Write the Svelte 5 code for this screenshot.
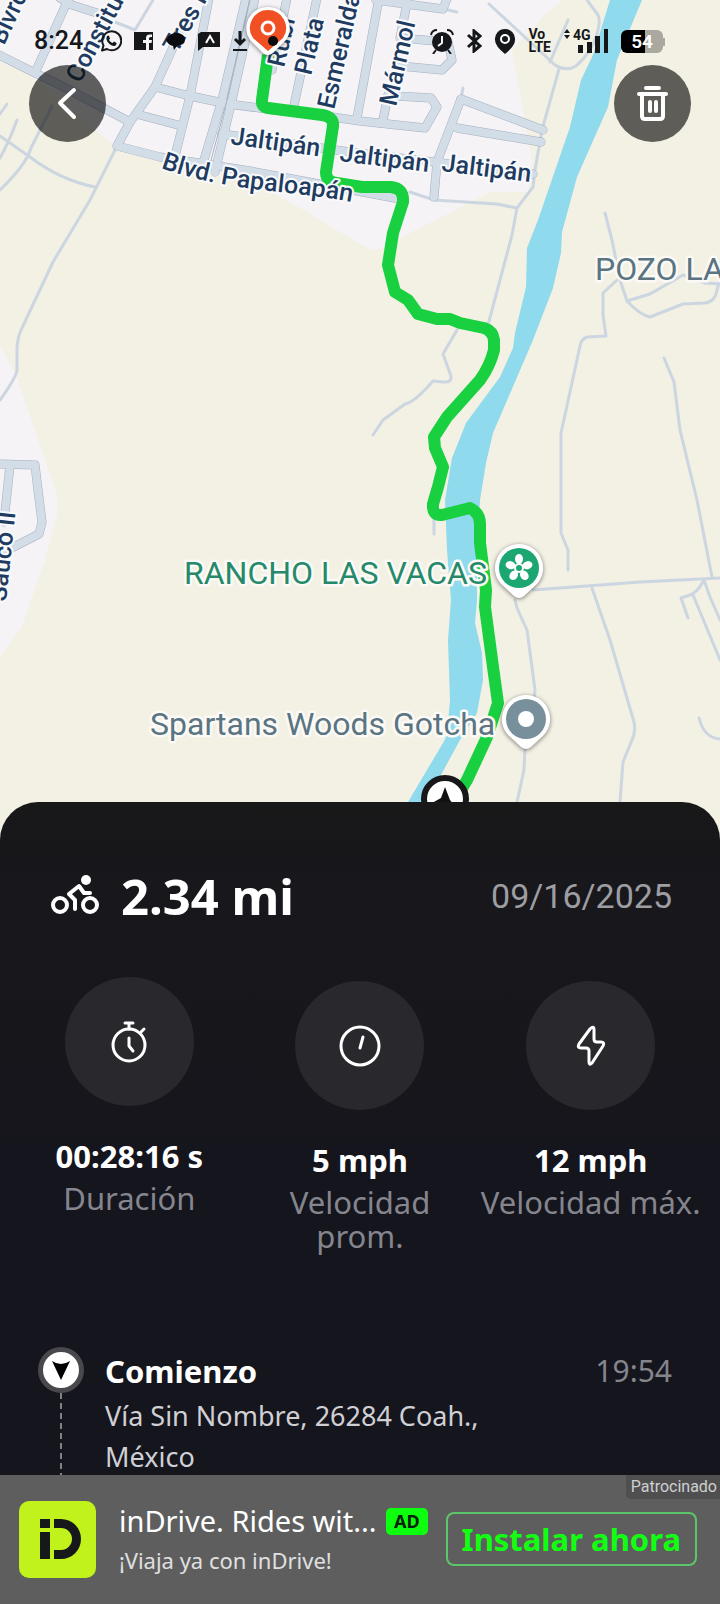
<script>
  const streets = [
    'M-5 53 L35 73 L60 85 L130 122 L117 146 L160 157 L250 171 L400 199',
    'M68 0 L35 73',
    'M60 -2 L72 5 L100 14',
    'M180 32 L155 87 L130 122',
    'M155 87 L190 96 L228 104 L267 109 L325 116 L360 121 L425 128 L437 107 L431 98 L396 96',
    'M140 115 L178 125',
    'M209 -2 L190 96 L175 156',
    'M246 -2 L222 100 L203 163',
    'M255 -2 L232 100 L215 172',
    'M287 -2 L272 70',
    'M317 -2 L293 110',
    'M222 134 L350 152 L434 162 L533 174',
    'M379 -2 L357 118',
    'M376 0 L443 9 L448 -4',
    'M407 3 L400 38 L448 42 L452 60 L442 70 L400 66',
    'M383 120 L388 95',
    'M461 99 L543 130',
    'M457 128 L541 142',
    'M461 99 L437 162 L434 197'
  ];
  const westStreets = [
    'M-4 464 L35 465 L38 490 L42 522 L39 534 L0 554',
    'M10 465 L4 522'
  ];
  const tracks = [
    'M115 150 L90 200 L53 262 L22 328 Q17 338 17 350 L17 370 Q16 378 0 400',
    'M0 136 L30 157 Q60 180 95 187',
    'M17 120 Q10 140 0 158',
    'M7 104 L0 114',
    'M52 106 L31 148 Q26 165 0 190',
    'M115 22 L135 30 L153 0',
    'M448 10 L457 12',
    'M489 4 L555 65 Q566 72 576 66 Q592 52 597 34 Q601 20 598 15 L587 0',
    'M568 20 L550 62',
    'M463 88 L461 98',
    'M559 69 L542 130 L535 170 L533 187 L517 208 L512 235 L488 325',
    'M410 192 L434 200 L497 204 L517 208',
    'M605 213 L612 240 L620 280 L627 301 Q640 315 650 317 L683 304 L705 303 Q715 302 717 290 L720 280',
    'M627 301 L650 294 L683 275 L705 283 L720 284',
    'M617 280 L603 293 L603 315 L606 336 L587 337 Q581 339 580 346 L561 433 L561 533 L568 550 L568 570',
    'M664 358 L674 382 L680 430 L697 500 L712 577',
    'M457 330 L443 354 L451 376 Q452 383 443 382 L433 381 Q415 402 405 404 L383 420 L373 435',
    'M434 518 L434 534',
    'M533 590 L640 582 L720 578',
    'M592 588 L610 640 L634 722 Q636 732 632 740 L623 762 L619 815',
    'M515 600 L517 608 L527 630 L531 660 L535 690 L534 700',
    'M525 748 L524 770 L517 802 L514 820',
    'M704 580 Q698 592 690 595 L681 598 L688 618',
    'M693 595 L720 660',
    'M704 580 L710 597 L720 620',
    'M699 718 Q704 738 720 739'
  ];
  const route =
    'M268 55 L262 100 Q261 107 268 108 L322 115 Q334 117 333 126 L326 172 Q326 182 337 183 L362 187 L391 187 Q404 188 403 202 L393 233 L388 265 L395 292 L408 300 L418 314 L437 319 L450 319 L460 323 L484 328 Q493 331 494 340 L494 350 Q490 366 480 380 L447 417 L434 437 L435 448 L443 467 L438 487 L433 504 Q432 516 442 515 L470 508 Q480 513 480 524 L480 543 L486 590 L485 607 L493 667 L498 703 L487 737 L467 780 L455 800';

  const streetLabels = [
    { text: 'Blvrd', x: 4, y: 46, turn: -65 },
    { text: 'Constitución', x: 80, y: 84, turn: -62 },
    { text: 'Tres Pinos', x: 177, y: 54, turn: -61 },
    { text: 'Rubí', x: 284, y: 68, turn: -77 },
    { text: 'Plata', x: 311, y: 76, turn: -77 },
    { text: 'Esmeralda', x: 334, y: 110, turn: -77 },
    { text: 'Mármol', x: 396, y: 107, turn: -77 },
    { text: 'Jaltipán', x: 230, y: 144, turn: 8 },
    { text: 'Jaltipán', x: 339, y: 161, turn: 7 },
    { text: 'Jaltipán', x: 441, y: 171, turn: 7 },
    { text: 'Sauco II', x: 6, y: 602, turn: -84 }
  ];

  const stats = [
    { icon: 'timer', value: '00:28:16 s', label: 'Duración' },
    { icon: 'speed', value: '5 mph', label: 'Velocidad prom.' },
    { icon: 'bolt', value: '12 mph', label: 'Velocidad máx.' }
  ];
</script>

<div class="screen">
  <main class="scroll">
    <section class="map">
      <svg class="canvas" viewBox="0 0 720 842" role="img" aria-label="Mapa del recorrido">
        <rect width="720" height="842" fill="#f3f0e4" />
        <path fill="#f5f3f6" d="M0 0 H562 L545 15 L512 50 L523 110 L532 160 L528 192 L490 192 L467 204 L410 233 L385 248 L372 250 L345 235 L300 208 L250 180 L117 148 L105 138 L30 75 L0 62Z" />
        <path fill="#f5f3f6" d="M0 345 L17 378 L40 445 L57 495 V515 L45 560 L22 627 L0 657Z" />
        <path fill="#8fdaec" d="M610 0 L593 55 L581 80 L570 127 L538 220 L527 248 L526 287 L515 333 L513 348 L500 377 L466 423 L452 458 L445 500 L447 550 L451 600 L448 640 L450 700 L447 735 L443 743 L408 802 L396 822 H421 L442 773 L460 740 L477 713 L483 680 L482 653 L475 623 L477 600 L477 550 L480 500 L486 463 L493 433 L533 340 L553 288 L561 253 L562 232 L577 177 L608 107 L617 60 L642 0Z" />
        <g fill="none" stroke="#ccd6e1" stroke-width="3" stroke-linejoin="round" stroke-linecap="round">
          {#each tracks as d}<path {d} />{/each}
        </g>
        <g fill="none" stroke-linejoin="round" stroke-linecap="round">
          {#each [...streets, ...westStreets] as d}<path {d} stroke="#a3afbf" stroke-width="9" />{/each}
          {#each [...streets, ...westStreets] as d}<path {d} stroke="#d3dde8" stroke-width="8" />{/each}
          <path d="M250 -2 L227 100 L209 168" stroke="#a3afbf" stroke-width="1" />
        </g>
        <path d={route} fill="none" stroke="#19d040" stroke-width="12" stroke-linejoin="round" />

        <g class="street">
          {#each streetLabels as s}
            <text transform="translate({s.x} {s.y}) rotate({s.turn})">{s.text}</text>
          {/each}
          <path id="boulevard" d="M161 168 Q205 184 270 191 T356 203" fill="none" stroke="none" />
          <text><textPath href="#boulevard">Blvd. Papaloapán</textPath></text>
        </g>
        <g class="place">
          <text x="184" y="584" fill="#25896a">RANCHO LAS VACAS</text>
          <text x="150" y="735" fill="#5a7482">Spartans Woods Gotcha</text>
          <text x="595" y="280" fill="#5a7482">POZO LA PALMA</text>
        </g>

        <g class="pin" transform="translate(519 568)">
          <path fill="#fff" d="M0 -24 A24 24 0 0 1 18 16 L5 28 Q0 32 -5 28 L-18 16 A24 24 0 0 1 0 -24Z" />
          <circle r="20" fill="#1ba672" />
          {#each [0, 72, 144, 216, 288] as a}
            <ellipse cx="0" cy="-9" rx="4" ry="5" fill="#fff" transform="rotate({a})" />
          {/each}
          <circle r="5" fill="#fff" /><circle r="3" fill="#1ba672" />
        </g>
        <g class="pin" transform="translate(526 719)">
          <path fill="#fff" d="M0 -24 A24 24 0 0 1 18 16 L5 28 Q0 32 -5 28 L-18 16 A24 24 0 0 1 0 -24Z" />
          <circle r="20" fill="#78909c" /><circle r="8" fill="#fff" />
        </g>
        <g class="pin" transform="translate(268 28)">
          <path fill="#fff" d="M0 -21 A21 21 0 0 1 18 12 L5 25 Q0 29 -5 25 L-18 12 A21 21 0 0 1 0 -21Z" />
          <path fill="#f15024" d="M0 -18 A18 18 0 0 1 15 10 L0 23 L-15 10 A18 18 0 0 1 0 -18Z" />
          <circle r="6" fill="none" stroke="#fff" stroke-width="3" />
        </g>
        <g transform="translate(445 799)">
          <circle r="21" fill="#fff" stroke="#18181a" stroke-width="6" />
          <path d="M0 -12 L5 1 L13 11 L0 6 L-13 4 L-4 -1Z" fill="#111" />
        </g>
      </svg>

      <div class="overlay">
        <div class="status">
          <div class="group">
            <span class="clock">8:24</span>
            <svg width="22" height="22" viewBox="0 0 22 22"><path d="M2 20.5 L3.500 15.500 A9.500 9.500 0 1 1 7 19Z" fill="none" stroke="#15171a" stroke-width="2" stroke-linejoin="round" /><path d="M7 6 Q8 5 9 6 L10 8.500 L9 10 Q10 12 12.500 13 L14 11.500 L16.500 13 Q17 14 15.500 15.500 Q13 17 9.500 14 Q5 10 7 6Z" fill="#15171a" /></svg>
            <svg width="20" height="20" viewBox="0 0 20 20"><path fill="#15171a" fill-rule="evenodd" d="M0 1 H19 V19 H15 V12 H17.500 L18 9 H15 V7.500 Q15 6 16.500 6 H18 V3.500 H15.500 Q12 3.500 12 7 V9 H9 V12 H12 V19 H0Z" /></svg>
            <svg width="20" height="20" viewBox="0 0 20 20"><path fill="#0b0c0d" d="M10 2 C16 2 19 5 19 9 C19 13 15 14 11 15 L8 19 L7 15 Q2 14 0 9 Q3 2 10 2Z" /></svg>
            <svg width="22" height="20" viewBox="0 0 22 20"><path fill="#15171a" d="M3 1 H22 V16 H5 L0 20 V3Z" /><path d="M8 12 L12 5 L16 12" fill="none" stroke="#fff" stroke-width="2" /></svg>
            <svg width="16" height="22" viewBox="0 0 16 22"><path d="M8 1 V14 M3 9 L8 14 L13 9" fill="none" stroke="#15171a" stroke-width="3" /><path d="M1 20 H15" stroke="#15171a" stroke-width="2" /></svg>
            <span class="dot"></span>
          </div>
          <div class="group">
            <svg width="24" height="25" viewBox="0 0 24 25"><circle cx="12" cy="13" r="10" fill="#15171a" /><path d="M1 6 Q2 1 7 1 M17 1 Q22 1 23 6 M6 21 L3 25 M18 21 L21 25" fill="none" stroke="#15171a" stroke-width="2" /><path d="M12 7 V14 L8 17" fill="none" stroke="#f5f3f6" stroke-width="2" /></svg>
            <svg width="16" height="24" viewBox="0 0 16 24"><path d="M2 6 L14 17 L8 22 V2 L14 7 L2 18" fill="none" stroke="#15171a" stroke-width="3" /></svg>
            <svg width="22" height="25" viewBox="0 0 22 25"><path fill="#15171a" d="M11 0 A10 10 0 0 1 21 11 Q21 17 11 25 Q1 17 1 11 A10 10 0 0 1 11 0Z" /><circle cx="11" cy="10" r="4" fill="none" stroke="#fff" stroke-width="2" /></svg>
            <span class="volte">Vo<br />LTE</span>
            <svg width="46" height="26" viewBox="0 0 46 26"><path fill="#15171a" d="M1 5 L4 1 L7 5Z M1 7 L4 11 L7 7Z M15 17 h5 v8 h-5z M24 14 h5 v11 h-5z M32 8 h5 v17 h-5z M41 1 h4 v24 h-4z" /><text x="10" y="12" class="net">4G</text></svg>
            <span class="battery">54</span>
          </div>
        </div>
        <div class="actions">
          <button class="round" aria-label="Volver">
            <svg width="77" height="77" viewBox="0 0 77 77"><path d="M45 25 L31 38 L45 52" fill="none" stroke="#fff" stroke-width="4" stroke-linecap="round" stroke-linejoin="round" /></svg>
          </button>
          <button class="round" aria-label="Eliminar">
            <svg width="77" height="77" viewBox="0 0 77 77"><g fill="none" stroke="#fff" stroke-width="4" stroke-linecap="round" stroke-linejoin="round"><path d="M32 23 H45" /><path d="M25 29 H52" /><path d="M28 30 V51 Q28 54 31 54 H46 Q49 54 49 51 V30" /><path d="M36 37 V46 M42 37 V46" /></g></svg>
          </button>
        </div>
      </div>
    </section>

    <section class="sheet">
      <header class="summary">
        <svg width="50" height="42" viewBox="0 0 50 42">
          <g fill="none" stroke="#fff" stroke-width="4" stroke-linecap="round" stroke-linejoin="round">
            <circle cx="9" cy="30" r="7" /><circle cx="39" cy="30" r="7" />
            <path d="M24 34 V25 L18 19 L28 11 L33 18 H39" />
          </g>
          <circle cx="35" cy="5" r="5" fill="#fff" />
        </svg>
        <h1>2.34 mi</h1>
        <time class="date" datetime="2025-09-16">09/16/2025</time>
      </header>

      <div class="stats">
        {#each stats as s}
          <div class="stat">
            <div class="disc">
              <svg width="48" height="48" viewBox="0 0 48 48" fill="none" stroke="#fff" stroke-width="3" stroke-linecap="round" stroke-linejoin="round">
                {#if s.icon === 'timer'}
                  <circle cx="24" cy="27" r="16" /><path d="M20 5 H28 M24 5 V11 M36 14 L39 11" /><path d="M24 20 V28 L28 33" />
                {:else if s.icon === 'speed'}
                  <circle cx="24" cy="24" r="19" /><path d="M27 15 L24 26" />
                {:else}
                  <path d="M23 7 Q27 3 27 8 V17 Q27 20 30 20 H34 Q38 20 36 24 L25 41 Q22 44 22 40 V29 Q22 26 19 26 H14 Q10 26 12 22Z" />
                {/if}
              </svg>
            </div>
            <strong>{s.value}</strong>
            <span>{s.label}</span>
          </div>
        {/each}
      </div>

      <div class="stop">
        <div class="rail">
          <span class="marker">
            <svg width="20" height="22" viewBox="0 0 20 22"><path d="M1 2 Q10 8 19 2 L10 21Z" fill="#000" /></svg>
          </span>
          <span class="dashes"></span>
        </div>
        <div class="place-info">
          <div class="line">
            <h2>Comienzo</h2>
            <time>19:54</time>
          </div>
          <p>Vía Sin Nombre, 26284 Coah., México</p>
        </div>
      </div>
    </section>
  </main>

  <footer class="ad">
    <span class="sponsored">Patrocinado</span>
    <svg class="logo" width="77" height="77" viewBox="0 0 77 77">
      <rect width="77" height="77" rx="10" fill="#c1f21c" />
      <path fill="#17181a" d="M21 18 h10 v9 h-10z M21 31 h10 v27 h-10z M35 18 h7 a20 20 0 0 1 0 40 h-7 v-9 h7 a11 11 0 0 0 0 -22 h-7z" />
    </svg>
    <div class="copy">
      <div class="headline">
        <span class="title">inDrive. Rides wit...</span>
        <span class="tag">AD</span>
      </div>
      <span class="sub">¡Viaja ya con inDrive!</span>
    </div>
    <button class="install">Instalar ahora</button>
  </footer>
</div>

<style>
  :global(body) {
    background: #15151e;
  }
  .screen {
    height: 100vh;
    display: flex;
    flex-direction: column;
    overflow: hidden;
    font-family: 'Noto Sans', sans-serif;
    background: #15151e;
    color: #fff;
  }
  .screen :is(h1, h2, p) {
    margin: 0;
  }
  svg {
    display: block;
    flex: none;
  }
  .scroll {
    flex: 1;
    min-height: 0;
    overflow-y: auto;
    scrollbar-width: none;
  }
  .map {
    position: relative;
  }
  .canvas {
    width: 100%;
    height: auto;
  }
  .street text {
    font: 500 25px Roboto, sans-serif;
    fill: #1f3b60;
    stroke: #f8fafc;
    stroke-width: 4px;
    stroke-linejoin: round;
    paint-order: stroke;
  }
  .place text {
    font: 400 32px Roboto, sans-serif;
    stroke: #fbfaf6;
    stroke-width: 5px;
    stroke-linejoin: round;
    paint-order: stroke;
  }
  .pin {
    filter: drop-shadow(0 1px 2px rgba(0, 0, 0, 0.5));
  }
  .overlay {
    position: absolute;
    inset: 0 0 auto;
  }
  .status {
    display: flex;
    justify-content: space-between;
    padding: 26px 55px 0 34px;
    height: 30px;
    font-family: Roboto, sans-serif;
    color: #15171a;
  }
  .group {
    display: flex;
    align-items: center;
    gap: 12px;
  }
  .clock {
    font-size: 25px;
    font-weight: 500;
    line-height: 28px;
    margin-right: 5px;
  }
  .dot {
    width: 10px;
    height: 10px;
    margin-left: 8px;
    border-radius: 50%;
    background: #0b0c0d;
  }
  .volte {
    font-size: 14px;
    font-weight: 700;
    line-height: 13px;
  }
  .net {
    font: 700 14px Roboto, sans-serif;
    fill: #15171a;
  }
  .battery {
    position: relative;
    width: 42px;
    height: 23px;
    margin-right: 2px;
    border-radius: 6px;
    background: linear-gradient(90deg, #000 57%, #aaa89f 57%);
    color: #fff;
    font-size: 19px;
    font-weight: 600;
    line-height: 24px;
    text-align: center;
  }
  .battery::after {
    content: '';
    position: absolute;
    left: 100%;
    top: 8px;
    width: 2px;
    height: 8px;
    background: #aaa89f;
  }
  .actions {
    display: flex;
    justify-content: space-between;
    padding: 9px 29px 0;
  }
  .round {
    width: 77px;
    height: 77px;
    padding: 0;
    border: 0;
    border-radius: 50%;
    background: rgba(10, 10, 10, 0.64);
  }

  .sheet {
    position: relative;
    margin-top: -40px;
    border-radius: 38px 38px 0 0;
    background: linear-gradient(#181819, #17171c 80px, #17161c 320px, #15151e 350px);
  }
  .summary {
    display: flex;
    align-items: center;
    padding: 60px 48px 0 51px;
  }
  h1 {
    flex: 1;
    margin-left: 20px !important;
    font-size: 49px;
    line-height: 68px;
    font-weight: 700;
  }
  .date {
    font: 400 34px/40px Roboto, sans-serif;
    color: #9d9da2;
  }
  .stats {
    display: grid;
    grid-template-columns: repeat(3, 1fr);
    padding: 47px 14px 0;
  }
  .stat {
    display: flex;
    flex-direction: column;
    align-items: center;
    text-align: center;
  }
  .stat:not(:first-child) {
    padding-top: 4px;
  }
  .disc {
    width: 129px;
    height: 129px;
    display: grid;
    place-items: center;
    border-radius: 50%;
    background: #29282d;
  }
  .stat strong {
    margin-top: 30px;
    font-size: 31px;
    line-height: 40px;
  }
  .stat span {
    margin-top: 5px;
    padding: 0 4px;
    font-size: 31px;
    line-height: 34px;
    color: #85858d;
  }
  .stop {
    display: flex;
    gap: 21px;
    padding: 94px 48px 0 38px;
  }
  .rail {
    display: flex;
    flex-direction: column;
    align-items: center;
  }
  .marker {
    width: 36px;
    height: 36px;
    display: grid;
    place-items: center;
    border: 5px solid #48484d;
    border-radius: 50%;
    background: #fff;
  }
  .dashes {
    flex: 1;
    width: 2px;
    background: repeating-linear-gradient(#808087 0 6px, transparent 6px 10px);
  }
  .place-info {
    flex: 1;
  }
  .line {
    display: flex;
    justify-content: space-between;
    line-height: 48px;
  }
  h2 {
    font-size: 31px;
  }
  .line time {
    font-size: 30px;
    color: #85858d;
  }
  p {
    max-width: 400px;
    font-size: 27px;
    line-height: 41px;
    color: #d0d0d4;
  }

  .ad {
    position: relative;
    display: flex;
    align-items: center;
    padding: 26px 23px 26px 19px;
    background: #5e5e5e;
  }
  .sponsored {
    position: absolute;
    top: 0;
    right: 0;
    padding: 0 3px 0 5px;
    border-radius: 0 0 0 5px;
    background: #4f4f4f;
    color: #d0d0d0;
    font: 400 16px/24px Roboto, sans-serif;
  }
  .copy {
    flex: 1;
    min-width: 0;
    margin: 0 18px 0 23px;
  }
  .headline {
    display: flex;
    align-items: center;
    justify-content: space-between;
  }
  .title {
    white-space: nowrap;
    font-size: 29px;
    line-height: 38px;
  }
  .tag {
    padding: 0 8px;
    border-radius: 5px;
    background: #0dff0f;
    color: #06210a;
    font-size: 18px;
    font-weight: 700;
    line-height: 27px;
  }
  .sub {
    display: block;
    margin-top: 3px;
    font-size: 22px;
    line-height: 34px;
    color: #e0e0e0;
  }
  .install {
    height: 54px;
    margin-bottom: 2px;
    padding: 0 14px;
    border: 2px solid #5cc66a;
    border-radius: 8px;
    background: transparent;
    color: #12ff12;
    font: 700 31px 'Noto Sans', sans-serif;
  }
</style>
